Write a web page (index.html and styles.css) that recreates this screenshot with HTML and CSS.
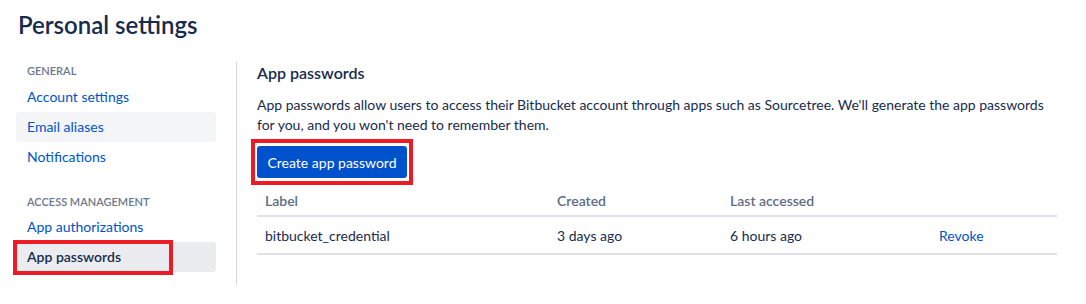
FILE: index.html
```html
<!DOCTYPE html>
<html>
<head>
<meta charset="utf-8">
<link rel="stylesheet" href="styles.css">
</head>
<body>
<h1 class="title">Personal settings</h1>
<div class="layout">
  <nav class="sidebar">
    <div class="nav-heading">GENERAL</div>
    <a class="nav-item">Account settings</a>
    <a class="nav-item hover">Email aliases</a>
    <a class="nav-item">Notifications</a>
    <div class="nav-heading second">ACCESS MANAGEMENT</div>
    <a class="nav-item">App authorizations</a>
    <a class="nav-item selected">App passwords<span class="mark mark-nav"></span></a>
  </nav>
  <main class="content">
    <h2 class="heading">App passwords</h2>
    <p class="desc">App passwords allow users to access their Bitbucket account through apps such as Sourcetree. We'll generate the app passwords for you, and you won't need to remember them.</p>
    <div class="btn-wrap"><button class="btn">Create app password</button></div>
    <table class="table">
      <thead>
        <tr><th class="c-label">Label</th><th class="c-created">Created</th><th class="c-last">Last accessed</th><th class="c-act"></th></tr>
      </thead>
      <tbody>
        <tr><td>bitbucket_credential</td><td>3 days ago</td><td>6 hours ago</td><td><a class="link">Revoke</a></td></tr>
      </tbody>
    </table>
  </main>
</div>
</body>
</html>
```
FILE: styles.css
```css
* { box-sizing: border-box; }
html, body { margin: 0; padding: 0; background: #fff; }
body {
  font-family: "Lato", "Noto Sans", sans-serif;
  color: #172B4D;
  font-size: 14px;
}
.title {
  margin: 0;
  padding: 9px 0 0 18px;
  font-size: 24px;
  font-weight: 600;
  line-height: 32px;
  color: #172B4D;
}
.layout {
  display: flex;
  padding: 21px 0 0 16px;
}
.sidebar {
  width: 200px;
  display: flex;
  flex-direction: column;
}
.nav-heading {
  font-size: 11px;
  font-weight: 600;
  color: #6B778C;
  line-height: 16px;
  padding-left: 11px;
  height: 20px;
  padding-top: 1px;
}
.nav-heading.second { margin-top: 21px; height: 19px; }
.nav-item {
  position: relative;
  display: block;
  height: 30px;
  line-height: 30px;
  padding-left: 11px;
  color: #0052CC;
  border-radius: 3px;
  font-size: 14px;
}
.nav-item.hover { background: #F4F5F7; }
.nav-item.selected { background: #EBECF0; color: #172B4D; font-weight: 600; }
.mark {
  position: absolute;
  border: 4px solid #EC1C24;
  pointer-events: none;
}
.mark-nav { left: -3px; top: -2px; width: 160px; height: 35px; }
.content {
  margin-left: 20px;
  border-left: 1px solid #D4D6DB;
  padding-left: 20px;
  width: 821px;
  padding-bottom: 30px;
}
.heading {
  margin: 0;
  font-size: 16px;
  font-weight: 600;
  line-height: 24px;
  margin-top: -1px;
}
.desc {
  margin: 10px 0 0 0;
  line-height: 20px;
  font-size: 14px;
  width: 800px;
}
.btn-wrap {
  display: inline-block;
  margin: 4px 0 0 -6px;
  border: 4px solid #EC1C24;
  padding: 3px 2px;
}
.btn {
  display: block;
  width: 150px;
  height: 32px;
  background: #0052CC;
  color: #fff;
  border: none;
  border-radius: 3px;
  font-family: inherit;
  font-size: 14px;
  padding: 0;
}
.table {
  width: 800px;
  border-collapse: collapse;
  margin-top: 0;
}
.table th {
  text-align: left;
  font-weight: 600;
  color: #5E6C84;
  font-size: 14px;
  height: 31px;
  padding: 1px 8px 0;
  border-bottom: 2px solid #DFE1E6;
}
.table td {
  height: 38px;
  padding: 0 8px;
  border-bottom: 2px solid #DFE1E6;
}
.c-label { width: 292px; }
.c-created { width: 173px; }
.c-last { width: 209px; }
.link { color: #0052CC; }
```
